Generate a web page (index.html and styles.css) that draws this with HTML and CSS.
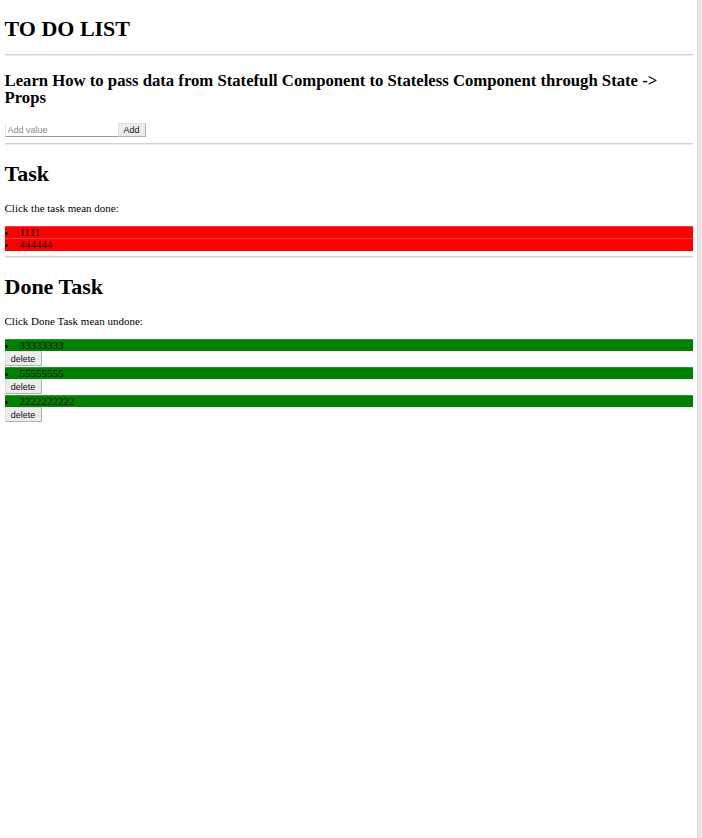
FILE: index.html
```html
<!DOCTYPE html>
<html lang="en">
<head>
<meta charset="utf-8">
<title>TO DO LIST</title>
<link rel="stylesheet" href="styles.css">
</head>
<body>
  <div class="page">
    <h1 class="title title-main">TO DO LIST</h1>
    <hr class="rule">
    <h3 class="subtitle">Learn How to pass data from Statefull Component to Stateless Component through State -&gt; Props</h3>
    <form class="add-form">
      <input class="add-input" type="text" placeholder="Add value">
      <button class="btn btn-add" type="button">Add</button>
    </form>
    <hr class="rule">
    <h1 class="title">Task</h1>
    <p class="hint">Click the task mean done:</p>
    <ul class="list">
      <li class="item item-todo">1111</li>
      <li class="item item-todo">444444</li>
    </ul>
    <hr class="rule">
    <h1 class="title">Done Task</h1>
    <p class="hint">Click Done Task mean undone:</p>
    <ul class="list">
      <li class="done-row">
        <div class="item item-done">33333333</div>
        <button class="btn btn-delete" type="button">delete</button>
      </li>
      <li class="done-row">
        <div class="item item-done">55555555</div>
        <button class="btn btn-delete" type="button">delete</button>
      </li>
      <li class="done-row">
        <div class="item item-done">2222222222</div>
        <button class="btn btn-delete" type="button">delete</button>
      </li>
    </ul>
  </div>
  <div class="scrollbar"></div>
</body>
</html>
```

FILE: styles.css
```css
html, body {
  margin: 0;
  padding: 0;
  background: #ffffff;
}

body {
  display: flex;
  min-height: 100vh;
  font-family: "Liberation Serif", "Times New Roman", serif;
  color: #000;
}

.page {
  flex: 1;
  min-width: 0;
  padding: 0 4px 0 4.5px;
}

.scrollbar {
  width: 4px;
  background: #e8e8e8;
  border-left: 1px solid #dadada;
}

.title {
  font-size: 22px;
  line-height: 25px;
  font-weight: bold;
  margin: 16.5px 0 15.5px;
}

.title-main {
  margin: 16px 0 13px;
}

.rule {
  height: 0;
  border: 0;
  border-top: 1px solid #d2d2d2;
  border-bottom: 1px solid #ececec;
  margin: 5px 0;
}

.subtitle {
  font-size: 16.7px;
  line-height: 17px;
  font-weight: bold;
  margin: 16px 0 17px;
}

.add-form {
  display: flex;
  height: 14px;
  margin: 17px 0 5.5px;
}

.add-input {
  box-sizing: border-box;
  width: 113px;
  height: 14px;
  margin: 0;
  padding: 0 2px;
  border: 0;
  border-bottom: 1px solid #9a9a9a;
  border-left: 1px solid #e4e4e4;
  font-family: "Liberation Sans", Arial, sans-serif;
  font-size: 9px;
  color: #000;
  background: #fff;
  outline: none;
}

.add-input::placeholder {
  color: #8a8a8a;
}

.btn {
  box-sizing: border-box;
  height: 14.4px;
  margin: 0;
  padding: 0 4px;
  font-family: "Liberation Sans", Arial, sans-serif;
  font-size: 9px;
  line-height: 12px;
  color: #111;
  background: #ececec;
  border: 1px solid;
  border-color: #dedede #b2b2b2 #b2b2b2 #dedede;
  border-radius: 0;
}

.btn-add {
  width: 28px;
  height: 14px;
}

.btn-delete {
  display: block;
  width: 37px;
  margin-bottom: 1px;
}

.hint {
  font-size: 11px;
  line-height: 12.6px;
  margin: 0 0 11.5px;
}

.list {
  list-style: none;
  margin: 0;
  padding: 0;
}

.item {
  display: list-item;
  list-style: disc inside;
  font-size: 11px;
  line-height: 12.6px;
  height: 12.6px;
}

.item-todo {
  background: #ff0000;
  box-shadow: inset 0 1px 0 #ff3c3c;
}

.item-done {
  background: #008000;
  box-shadow: inset 0 1px 0 #2a9a2a;
}
```
